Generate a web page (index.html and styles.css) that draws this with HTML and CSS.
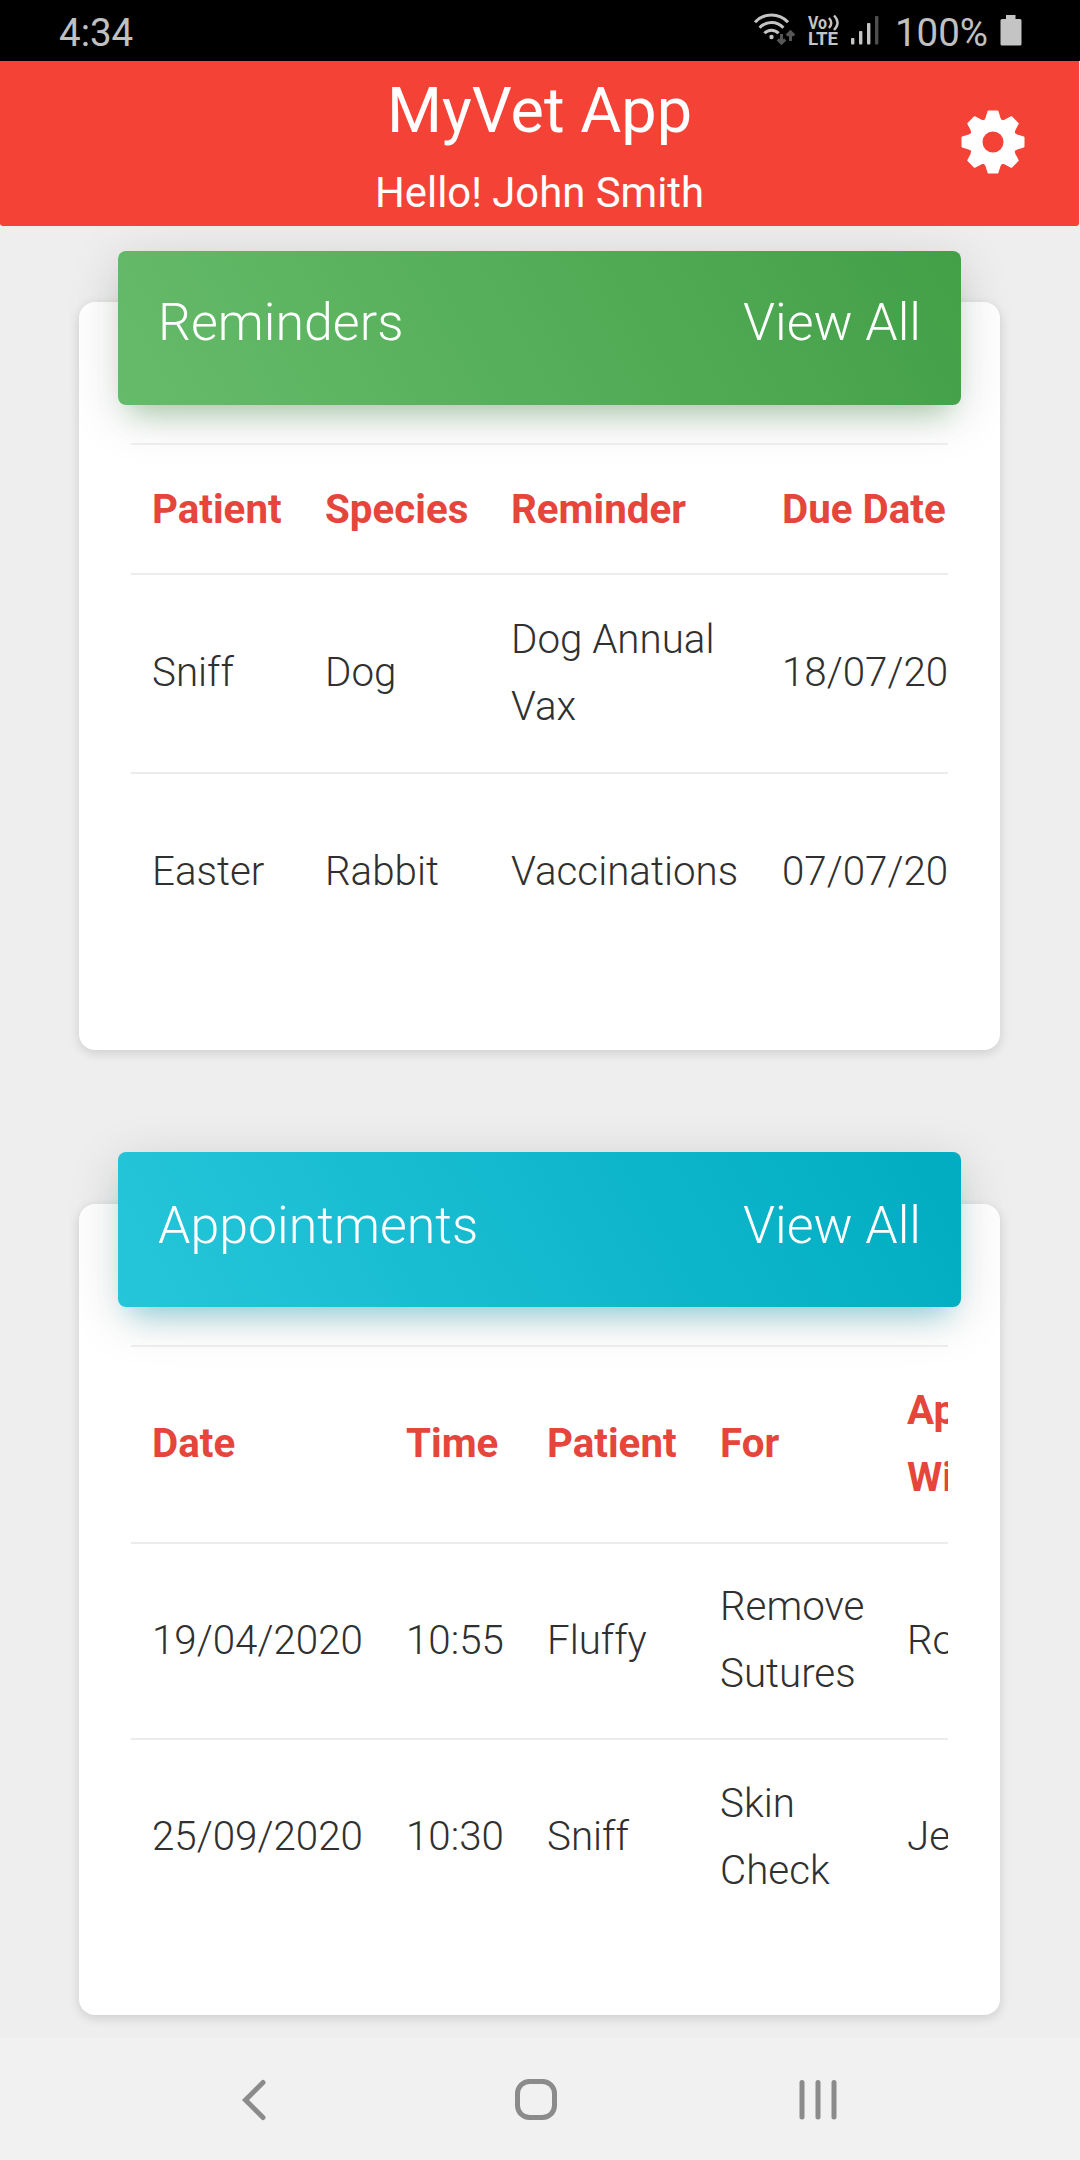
FILE: index.html
```
<!DOCTYPE html>
<html lang="en">
<head>
<meta charset="utf-8">
<title>MyVet App</title>
<link rel="stylesheet" href="styles.css">
</head>
<body>
<div class="status">
  <span class="clock">4:34</span>
  <div class="indicators">
    <svg class="wifi" width="46" height="36" viewBox="0 0 46 36" fill="none" stroke="#c4c4c4" stroke-width="3">
      <path d="M2 12.200a22.500 22.500 0 0 1 33 0M6.600 17.800a16 16 0 0 1 23.800 0M11.400 23.200a9.800 9.800 0 0 1 14.200 0"/>
      <circle cx="18.500" cy="27" r="2.200" fill="#c4c4c4" stroke="none"/>
      <path d="M28.500 24v9M24.800 29.400l3.700 3.800 3.700-3.800M37.500 31v-9M33.800 25.600l3.700-3.800 3.700 3.800" stroke="#565656"/>
    </svg>
    <svg class="volte" width="32" height="36" viewBox="0 0 32 36">
      <text x="0" y="18.500" font-size="17.500" textLength="19" lengthAdjust="spacingAndGlyphs">Vo</text>
      <text x="0" y="35" font-size="17.500" textLength="30" lengthAdjust="spacingAndGlyphs">LTE</text>
      <path d="M21 8q4.500 5 0 10M26 5.500q7 7 0 14.500" fill="none" stroke="#c4c4c4" stroke-width="2.400"/>
    </svg>
    <svg class="signal" width="28" height="30" viewBox="0 0 28 30" fill="#c4c4c4">
      <rect x="0" y="22" width="3.400" height="6.500" rx="1"/><rect x="8" y="15" width="3.400" height="13.500" rx="1"/>
      <rect x="16" y="7" width="3.400" height="21.500" rx="1"/><rect x="24" y="0" width="3.400" height="28.500" rx="1" fill="#4e4e4e"/>
    </svg>
    <span class="level">100%</span>
    <svg class="battery" width="22" height="32" viewBox="0 0 22 32" fill="#c4c4c4">
      <path d="M6 0h9.500v4H20a1.500 1.500 0 0 1 1.500 1.500V29a1.500 1.500 0 0 1-1.500 1.500H2A1.500 1.500 0 0 1 .5 29V5.500A1.500 1.500 0 0 1 2 4h4z"/>
    </svg>
  </div>
</div>

<header class="appbar">
  <div class="titles">
    <h1>MyVet App</h1>
    <p>Hello! John Smith</p>
  </div>
  <svg class="gear" width="64" height="64" viewBox="-32 -32 64 64">
    <defs><path id="tooth" d="M-4.500-30.500H4.500L6.500-24Q7.500-21 10.500-19.500L0 0-10.500-19.500Q-7.500-21-6.500-24z"/></defs>
    <g fill="#fff" stroke="#fff" stroke-width="2" stroke-linejoin="round">
      <use href="#tooth"/><use href="#tooth" transform="rotate(45)"/><use href="#tooth" transform="rotate(90)"/><use href="#tooth" transform="rotate(135)"/>
      <use href="#tooth" transform="rotate(180)"/><use href="#tooth" transform="rotate(225)"/><use href="#tooth" transform="rotate(270)"/><use href="#tooth" transform="rotate(315)"/>
    </g>
    <circle r="10.500" fill="#f44336"/>
  </svg>
</header>

<main class="content">
  <section class="card reminders">
    <div class="card-header green"><h2>Reminders</h2><a>View All</a></div>
    <div class="table-wrap">
      <table class="t-reminders">
        <colgroup><col class="c173"><col class="c186"><col class="c271"><col class="c190"></colgroup>
        <thead><tr><th>Patient</th><th>Species</th><th>Reminder</th><th>Due Date</th></tr></thead>
        <tbody>
          <tr><td>Sniff</td><td>Dog</td><td>Dog Annual<br>Vax</td><td>18/07/20</td></tr>
          <tr><td>Easter</td><td>Rabbit</td><td>Vaccinations</td><td>07/07/20</td></tr>
        </tbody>
      </table>
    </div>
  </section>
  <section class="card appointments">
    <div class="card-header cyan"><h2>Appointments</h2><a>View All</a></div>
    <div class="table-wrap">
      <table class="t-appointments">
        <colgroup><col class="c254"><col class="c141"><col class="c173"><col class="c187"><col class="c120"></colgroup>
        <thead><tr><th>Date</th><th>Time</th><th>Patient</th><th>For</th><th>Ap<br>Wi</th></tr></thead>
        <tbody>
          <tr><td>19/04/2020</td><td>10:55</td><td>Fluffy</td><td>Remove<br>Sutures</td><td>Ro</td></tr>
          <tr><td>25/09/2020</td><td>10:30</td><td>Sniff</td><td>Skin<br>Check</td><td>Je</td></tr>
        </tbody>
      </table>
    </div>
  </section>
</main>

<nav class="navbar">
  <svg class="back" width="26" height="44" viewBox="0 0 26 44"><path d="M22 4.500L4.500 22 22 39.500"/></svg>
  <svg class="home" width="44" height="44" viewBox="0 0 44 44"><rect x="3.500" y="3.500" width="37" height="36" rx="12"/></svg>
  <svg class="recents" width="38" height="44" viewBox="0 0 38 44"><path d="M3 4.500v34.500M19 4.500v34.500M35 4.500v34.500"/></svg>
</nav>
</body>
</html>
```
FILE: styles.css
```
* { box-sizing: border-box; }
body {
  margin: 0;
  width: 1080px;
  height: 2160px;
  overflow: hidden;
  display: flex;
  flex-direction: column;
  background: #eee;
  font-family: Roboto, "Liberation Sans", sans-serif;
}
h1, h2, p { margin: 0; font-weight: 400; }

.status {
  flex: none;
  height: 61px;
  padding: 0 58px 0 59px;
  background: #000;
  color: #c0c0c0;
  display: flex;
  justify-content: space-between;
  align-items: center;
  position: relative;
  z-index: 2;
}
.clock, .level { font-size: 38.5px; line-height: 58px; padding-top: 4px; }
.indicators { display: flex; align-items: center; }
.wifi { margin-bottom: 5px; }
.volte { margin: 0 0 5px 9px; fill: #c4c4c4; font-weight: 700; overflow: visible; }
.signal { margin-left: 11px; }
.level { margin-left: 16px; }
.battery { margin-left: 12px; }

.appbar {
  flex: none;
  height: 165px;
  width: 1079px;
  background: #f44336;
  color: #fff;
  border-radius: 0 0 3px 3px;
  display: grid;
  grid-template-columns: 120px 1fr 120px;
  align-items: center;
  position: relative;
  z-index: 2;
}
.titles { grid-column: 2; text-align: center; align-self: start; }
.titles h1 { font-size: 63px; line-height: 72px; padding-top: 14px; }
.titles p { font-size: 41.8px; line-height: 48px; padding-top: 22px; }
.gear { justify-self: start; margin: 0 0 3px 2px; }

.content { flex: 1; padding: 76px 80px 0 79px; position: relative; z-index: 1; }
.card {
  display: flow-root;
  background: #fff;
  border-radius: 16px;
  box-shadow: 0 3px 11px rgba(0, 0, 0, .14);
  padding: 0 39px;
}
.reminders { height: 748px; margin-bottom: 154px; }
.appointments { height: 811px; }
.card-header {
  height: 154px;
  margin-top: -51px;
  border-radius: 8px;
  padding: 42px 40px 0;
  display: flex;
  justify-content: space-between;
  align-items: flex-start;
  color: #fff;
  font-size: 51.9px;
  font-weight: 300;
  line-height: 60px;
}
.card-header h2 { font-size: inherit; font-weight: 300; }
.green {
  background: linear-gradient(60deg, #66bb6a, #43a047);
  box-shadow: 0 11px 53px rgba(0, 0, 0, .14), 0 19px 27px -13px rgba(76, 175, 80, .4);
}
.cyan {
  height: 155px;
  margin-top: -52px;
  padding-top: 44px;
  background: linear-gradient(60deg, #26c6da, #00acc1);
  box-shadow: 0 11px 53px rgba(0, 0, 0, .14), 0 19px 27px -13px rgba(0, 188, 212, .4);
}

.table-wrap { margin: 38px 13px 0; overflow: hidden; }
table { table-layout: fixed; border-collapse: separate; border-spacing: 0; color: #303030; font-size: 40.3px; line-height: 67px; }
.t-reminders { width: 820px; }
.t-appointments { width: 875px; }
th, td { padding: 0 0 0 21px; text-align: left; vertical-align: middle; border-top: 2px solid #ececec; white-space: nowrap; }
th { color: #e6453b; font-weight: 700; }
td { font-weight: 300; }
.t-reminders th { height: 130px; }
.t-reminders td { height: 199px; padding-bottom: 2px; }
.t-appointments th, .t-appointments td { height: 197px; padding-bottom: 2px; }
.t-appointments tbody tr:first-child td { height: 196px; }
.c120 { width: 120px; }
.c141 { width: 141px; }
.c173 { width: 173px; }
.c186 { width: 186px; }
.c187 { width: 187px; }
.c190 { width: 190px; }
.c254 { width: 254px; }
.c271 { width: 271px; }

.navbar {
  flex: none;
  height: 123px;
  background: #f1f1f1;
  display: flex;
  align-items: center;
  padding: 2px 243px 0 241px;
  justify-content: space-between;
  position: relative;
  z-index: 2;
}
.navbar svg { fill: none; stroke: #8b8b8b; stroke-width: 5; stroke-linecap: round; stroke-linejoin: miter; }
.navbar .home { margin: 0 -3px 0 3px; }
```
